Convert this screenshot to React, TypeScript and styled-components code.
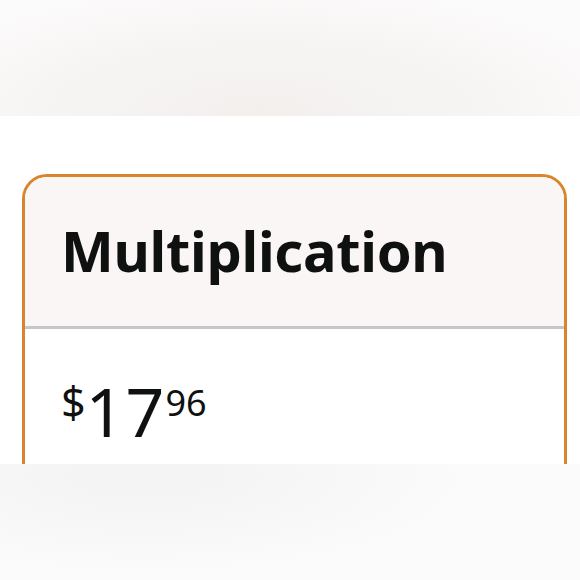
import React from 'react';
import styled, { createGlobalStyle } from 'styled-components';

const GlobalStyle = createGlobalStyle`
  html, body {
    margin: 0;
    padding: 0;
    background: #ffffff;
  }
  body {
    font-family: 'Noto Sans', 'Open Sans', Arial, sans-serif;
    color: #0f1111;
  }
`;

const Page = styled.div`
  display: flex;
  flex-direction: column;
  width: 580px;
  height: 580px;
  overflow: hidden;
`;

const Band = styled.div<{ $top?: boolean }>`
  height: 116px;
  flex-shrink: 0;
  background: ${({ $top }) =>
    $top
      ? 'radial-gradient(ellipse 70% 120% at 45% 100%, #f2efed 0%, #f7f5f4 55%, #fcfbfb 100%)'
      : 'radial-gradient(ellipse 60% 90% at 25% 10%, #f4f3f3 0%, #f8f7f7 50%, #fbfbfb 100%)'};
`;

const Stage = styled.div`
  flex: 1;
  overflow: hidden;
  background: #ffffff;
  padding: 58px 13px 0 22px;
`;

const Card = styled.section`
  border: 3px solid #d8862e;
  border-radius: 25px 25px 0 0;
  height: 420px;
  overflow: hidden;
  background: #ffffff;
`;

const Header = styled.div`
  height: 152px;
  box-sizing: border-box;
  padding: 45px 36px 0;
  background: #fbf6f6;
  border-bottom: 3px solid #c6c6c6;
`;

const Title = styled.h2`
  margin: 0;
  font-size: 56px;
  line-height: 56px;
  font-weight: 700;
  color: #0f1111;
  letter-spacing: -0.3px;
`;

const Body = styled.div`
  padding: 48px 36px 0;
`;

const Price = styled.div`
  display: flex;
  align-items: flex-start;
  color: #0f1111;
`;

const PricePart = styled.span<{ $size: number; $offset?: number; $spacing?: number }>`
  font-size: ${({ $size }) => $size}px;
  line-height: ${({ $size }) => $size}px;
  margin-top: ${({ $offset }) => $offset ?? 0}px;
  letter-spacing: ${({ $spacing }) => $spacing ?? 0}px;
`;

const App: React.FC = () => {
  return (
    <>
      <GlobalStyle />
      <Page>
        <Band $top />
        <Stage>
          <Card>
            <Header>
              <Title>Multiplication</Title>
            </Header>
            <Body>
              <Price>
                <PricePart $size={43} $offset={3}>$</PricePart>
                <PricePart $size={68} $spacing={1}>17</PricePart>
                <PricePart $size={36} $offset={8}>96</PricePart>
              </Price>
            </Body>
          </Card>
        </Stage>
        <Band />
      </Page>
    </>
  );
};

export default App;
